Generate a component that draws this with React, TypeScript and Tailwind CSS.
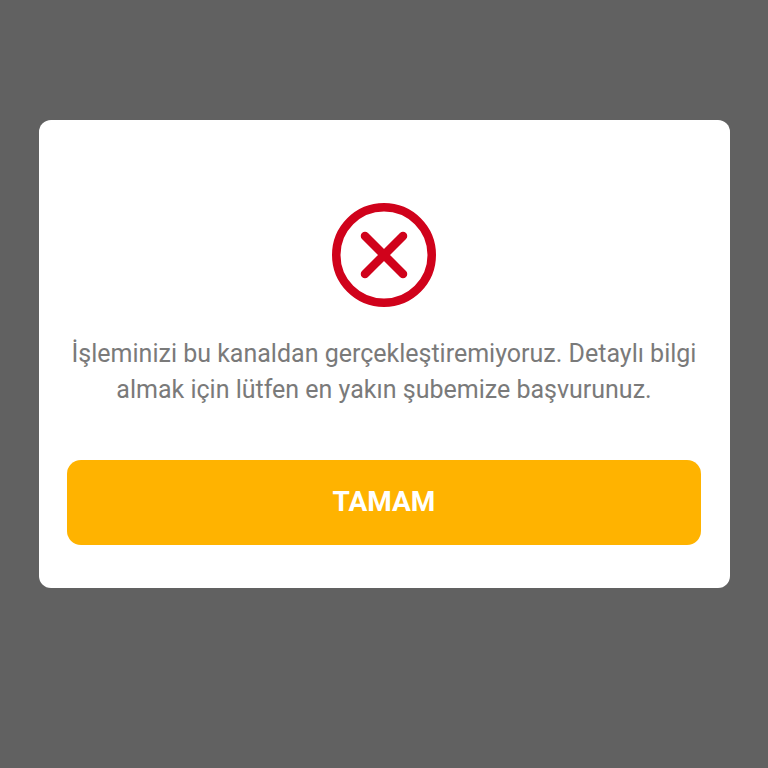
export default function App() {
  return (
    <div className="h-[768px] w-[768px] bg-[#616161] pt-[120px] pl-[39px] font-['Roboto',sans-serif]">
      <div className="flex h-[468px] w-[691px] flex-col items-center rounded-[12px] bg-white pl-[28px] pr-[29px] pt-[83px]">
        <svg width="104" height="104" viewBox="0 0 104 104" fill="none">
          <circle cx="52" cy="52" r="47.75" stroke="#d0021b" strokeWidth="8.5" />
          <path d="M33 33 L71 71 M71 33 L33 71" stroke="#d0021b" strokeWidth="8.5" strokeLinecap="round" />
        </svg>
        <p className="mt-[29px] text-center text-[25px] leading-[36px] whitespace-nowrap text-[#7a7a7a]">
          İşleminizi bu kanaldan gerçekleştiremiyoruz. Detaylı bilgi
          <br />
          almak için lütfen en yakın şubemize başvurunuz.
        </p>
        <button className="mt-[52px] flex h-[85px] w-full items-center justify-center rounded-[14px] bg-[#ffb300] pb-[2px] text-[28px] font-bold text-white">
          TAMAM
        </button>
      </div>
    </div>
  );
}
